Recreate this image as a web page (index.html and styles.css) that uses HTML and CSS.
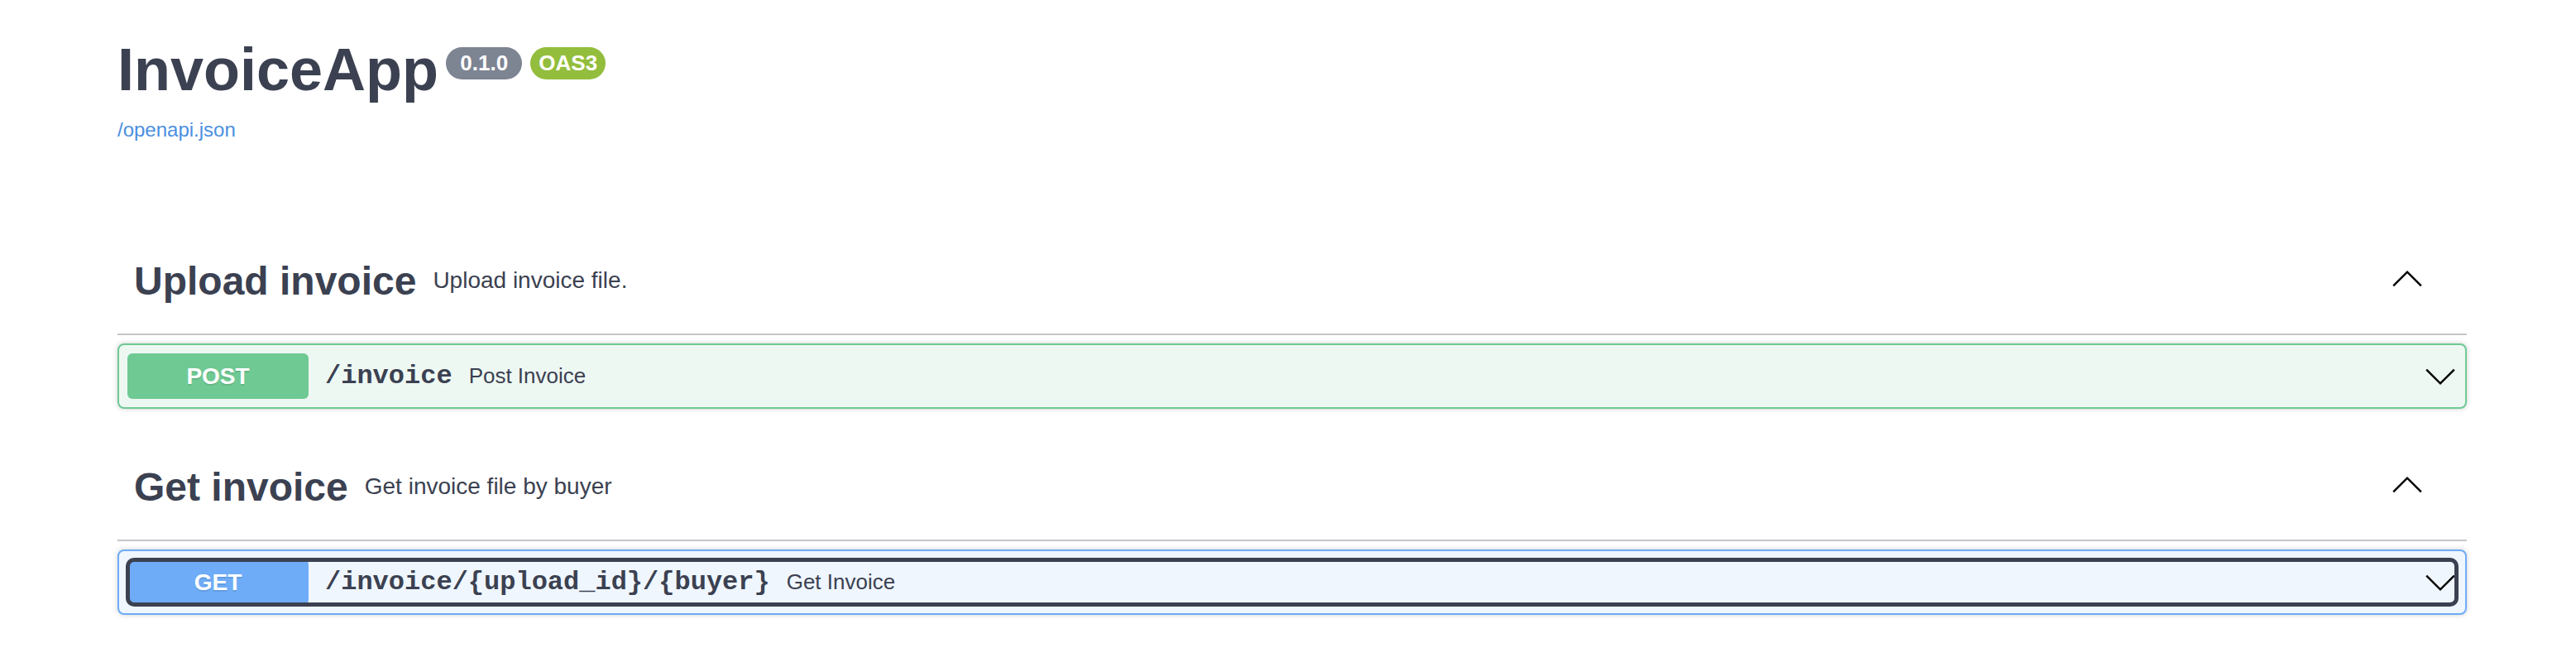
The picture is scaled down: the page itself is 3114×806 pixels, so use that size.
FILE: index.html
```html
<!DOCTYPE html>
<html lang="en">
<head>
<meta charset="utf-8">
<title>InvoiceApp - Swagger UI</title>
<link rel="stylesheet" href="styles.css">
</head>
<body>
<div class="wrapper">
  <div class="info">
    <div class="title-row">
      <h2 class="title">InvoiceApp</h2>
      <span class="badge badge-version"> 0.1.0 </span>
      <span class="badge badge-oas">OAS3</span>
    </div>
    <a class="base-url" href="#">/openapi.json</a>
  </div>

  <section class="tag-section">
    <div class="tag">
      <h3 class="tag-name">Upload invoice</h3>
      <span class="tag-desc">Upload invoice file.</span>
      <svg class="arrow tag-arrow" width="40" height="40" viewBox="0 0 20 20" aria-hidden="true"><polyline points="1.6,14.2 10,5.8 18.4,14.2" fill="none" stroke="#000" stroke-width="1.2"/></svg>
    </div>
    <div class="opblock opblock-post">
      <div class="summary">
        <span class="method">POST</span>
        <span class="path">/invoice</span>
        <span class="summary-desc">Post Invoice</span>
        <svg class="arrow op-arrow" width="40" height="40" viewBox="0 0 20 20" aria-hidden="true"><polyline points="1.6,5.8 10,14.2 18.4,5.8" fill="none" stroke="#000" stroke-width="1.2"/></svg>
      </div>
    </div>
  </section>

  <section class="tag-section">
    <div class="tag">
      <h3 class="tag-name">Get invoice</h3>
      <span class="tag-desc">Get invoice file by buyer</span>
      <svg class="arrow tag-arrow" width="40" height="40" viewBox="0 0 20 20" aria-hidden="true"><polyline points="1.6,14.2 10,5.8 18.4,14.2" fill="none" stroke="#000" stroke-width="1.2"/></svg>
    </div>
    <div class="opblock opblock-get">
      <div class="summary summary-focused">
        <span class="method">GET</span>
        <span class="path">/invoice/{upload_id}/{buyer}</span>
        <span class="summary-desc">Get Invoice</span>
        <svg class="arrow op-arrow" width="40" height="40" viewBox="0 0 20 20" aria-hidden="true"><polyline points="1.6,5.8 10,14.2 18.4,5.8" fill="none" stroke="#000" stroke-width="1.2"/></svg>
      </div>
    </div>
  </section>
</div>
</body>
</html>
```

FILE: styles.css
```css
html, body {
  margin: 0;
  padding: 0;
  background: #ffffff;
}

body {
  font-family: "Liberation Sans", Arial, Helvetica, sans-serif;
  color: #3b4151;
}

.wrapper {
  width: 2840px;
  margin: 0 0 0 142px;
  padding-bottom: 40px;
}

/* ---------- info ---------- */
.info {
  padding-top: 43px;
}

.title-row {
  display: flex;
  align-items: flex-start;
}

.title {
  margin: 0;
  font-size: 72px;
  line-height: 83px;
  font-weight: 700;
  color: #3b4151;
}

.badge {
  margin-top: 14px;
  margin-left: 10px;
  padding: 4px 10px;
  border-radius: 114px;
  font-size: 26px;
  line-height: 31px;
  font-weight: 700;
  color: #ffffff;
  white-space: pre;
}

.badge-version {
  margin-left: 9px;
  background: #7d8492;
}

.badge-oas {
  background: #93bd3c;
}

.base-url {
  display: block;
  margin-top: 17px;
  font-size: 24px;
  line-height: 28px;
  color: #4a8fe0;
  text-decoration: none;
  width: max-content;
}

/* ---------- tags ---------- */
.tag-section:first-of-type {
  margin-top: 104px;
}

.tag {
  display: flex;
  align-items: center;
  height: 128px;
  padding: 0 52px 0 20px;
  border-bottom: 2px solid #c5c6ca;
  margin-bottom: 10px;
}

.tag-name {
  margin: 0;
  font-size: 48px;
  font-weight: 700;
  color: #3b4151;
}

.tag-desc {
  margin-left: 20px;
  font-size: 28px;
  color: #3b4151;
}

.tag-arrow {
  margin-left: auto;
  margin-top: -4px;
}

/* ---------- operation blocks ---------- */
.opblock {
  border: 2px solid;
  border-radius: 8px;
  padding: 10px;
  margin-bottom: 30px;
  box-shadow: 0 0 6px rgba(0, 0, 0, 0.19);
}

.opblock-post {
  border-color: #6fc993;
  background: #eef8f3;
}

.opblock-get {
  border-color: #6eacf7;
  background: #eff6fe;
}

.summary {
  display: flex;
  align-items: center;
  height: 55px;
  border-radius: 8px;
}

.summary-focused {
  outline: 5px solid #3b4151;
  outline-offset: -3px;
}

.method {
  width: 219px;
  height: 55px;
  line-height: 55px;
  flex: none;
  text-align: center;
  border-radius: 6px;
  font-size: 28px;
  font-weight: 700;
  color: #ffffff;
  text-shadow: 0 2px 0 rgba(0, 0, 0, 0.1);
}

.opblock-post .method {
  background: #6fc993;
}

.opblock-get .method {
  background: #6eacf7;
}

.path {
  padding: 0 20px;
  font-family: "Liberation Mono", "Courier New", monospace;
  font-size: 32px;
  font-weight: 700;
  color: #3b4151;
}

.summary-desc {
  font-size: 26px;
  color: #3b4151;
}

.op-arrow {
  margin-left: auto;
  flex: none;
}
```
